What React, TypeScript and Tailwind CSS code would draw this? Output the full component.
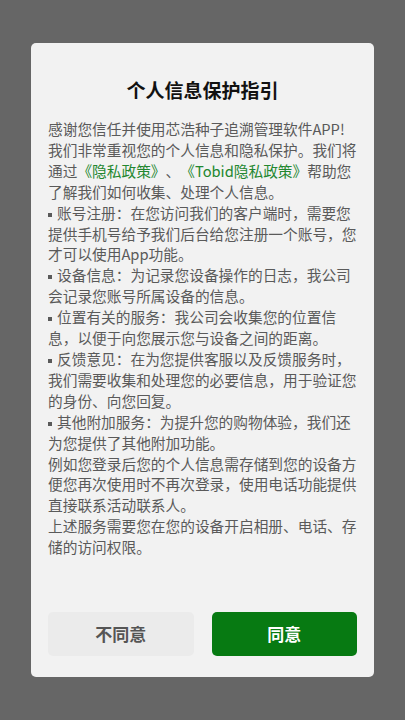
import React from 'react'

const Dot = () => (
  <span className="mr-[5px] inline-block h-[4px] w-[4px] bg-[#5a5a5a] align-middle" />
)

const items = [
  '账号注册：在您访问我们的客户端时，需要您提供手机号给予我们后台给您注册一个账号，您才可以使用App功能。',
  '设备信息：为记录您设备操作的日志，我公司会记录您账号所属设备的信息。',
  '位置有关的服务：我公司会收集您的位置信息，以便于向您展示您与设备之间的距离。',
  '反馈意见：在为您提供客服以及反馈服务时，我们需要收集和处理您的必要信息，用于验证您的身份、向您回复。',
  '其他附加服务：为提升您的购物体验，我们还为您提供了其他附加功能。',
]

export default function App() {
  return (
    <div
      className="flex h-[720px] w-full items-center justify-center bg-[#666666]"
      style={{ fontFamily: '"Noto Sans CJK SC", "Noto Sans", sans-serif' }}
    >
      <div className="flex h-[634px] w-[343px] flex-col rounded-[5px] bg-[#f2f2f2] px-[17px] pb-[21px] pt-[34px]">
        <h1 className="text-center text-[19px] font-bold leading-[26px] text-[#111111]">个人信息保护指引</h1>

        <div className="mt-[16px] flex-1 text-[14.7px] leading-[20.9px] text-[#5a5a5a] [text-spacing-trim:space-all]">
          <p>
            感谢您信任并使用芯浩种子追溯管理软件APP!
            <br />
            我们非常重视您的个人信息和隐私保护。我们将通过
            <span className="text-[#23872f]">《隐私政策》</span>、
            <span className="text-[#23872f]">《Tobid隐私政策》</span>
            帮助您了解我们如何收集、处理个人信息。
          </p>
          {items.map(text => (
            <p key={text}>
              <Dot />
              {text}
            </p>
          ))}
          <p>例如您登录后您的个人信息需存储到您的设备方便您再次使用时不再次登录，使用电话功能提供直接联系活动联系人。</p>
          <p>上述服务需要您在您的设备开启相册、电话、存储的访问权限。</p>
        </div>

        <div className="grid grid-cols-2 gap-[18px]">
          <button className="h-[44px] rounded-[5px] bg-[#ebebeb] text-[17px] font-bold text-[#555555]">不同意</button>
          <button className="h-[44px] rounded-[5px] bg-[#077a12] text-[17px] font-bold text-white">同意</button>
        </div>
      </div>
    </div>
  )
}
